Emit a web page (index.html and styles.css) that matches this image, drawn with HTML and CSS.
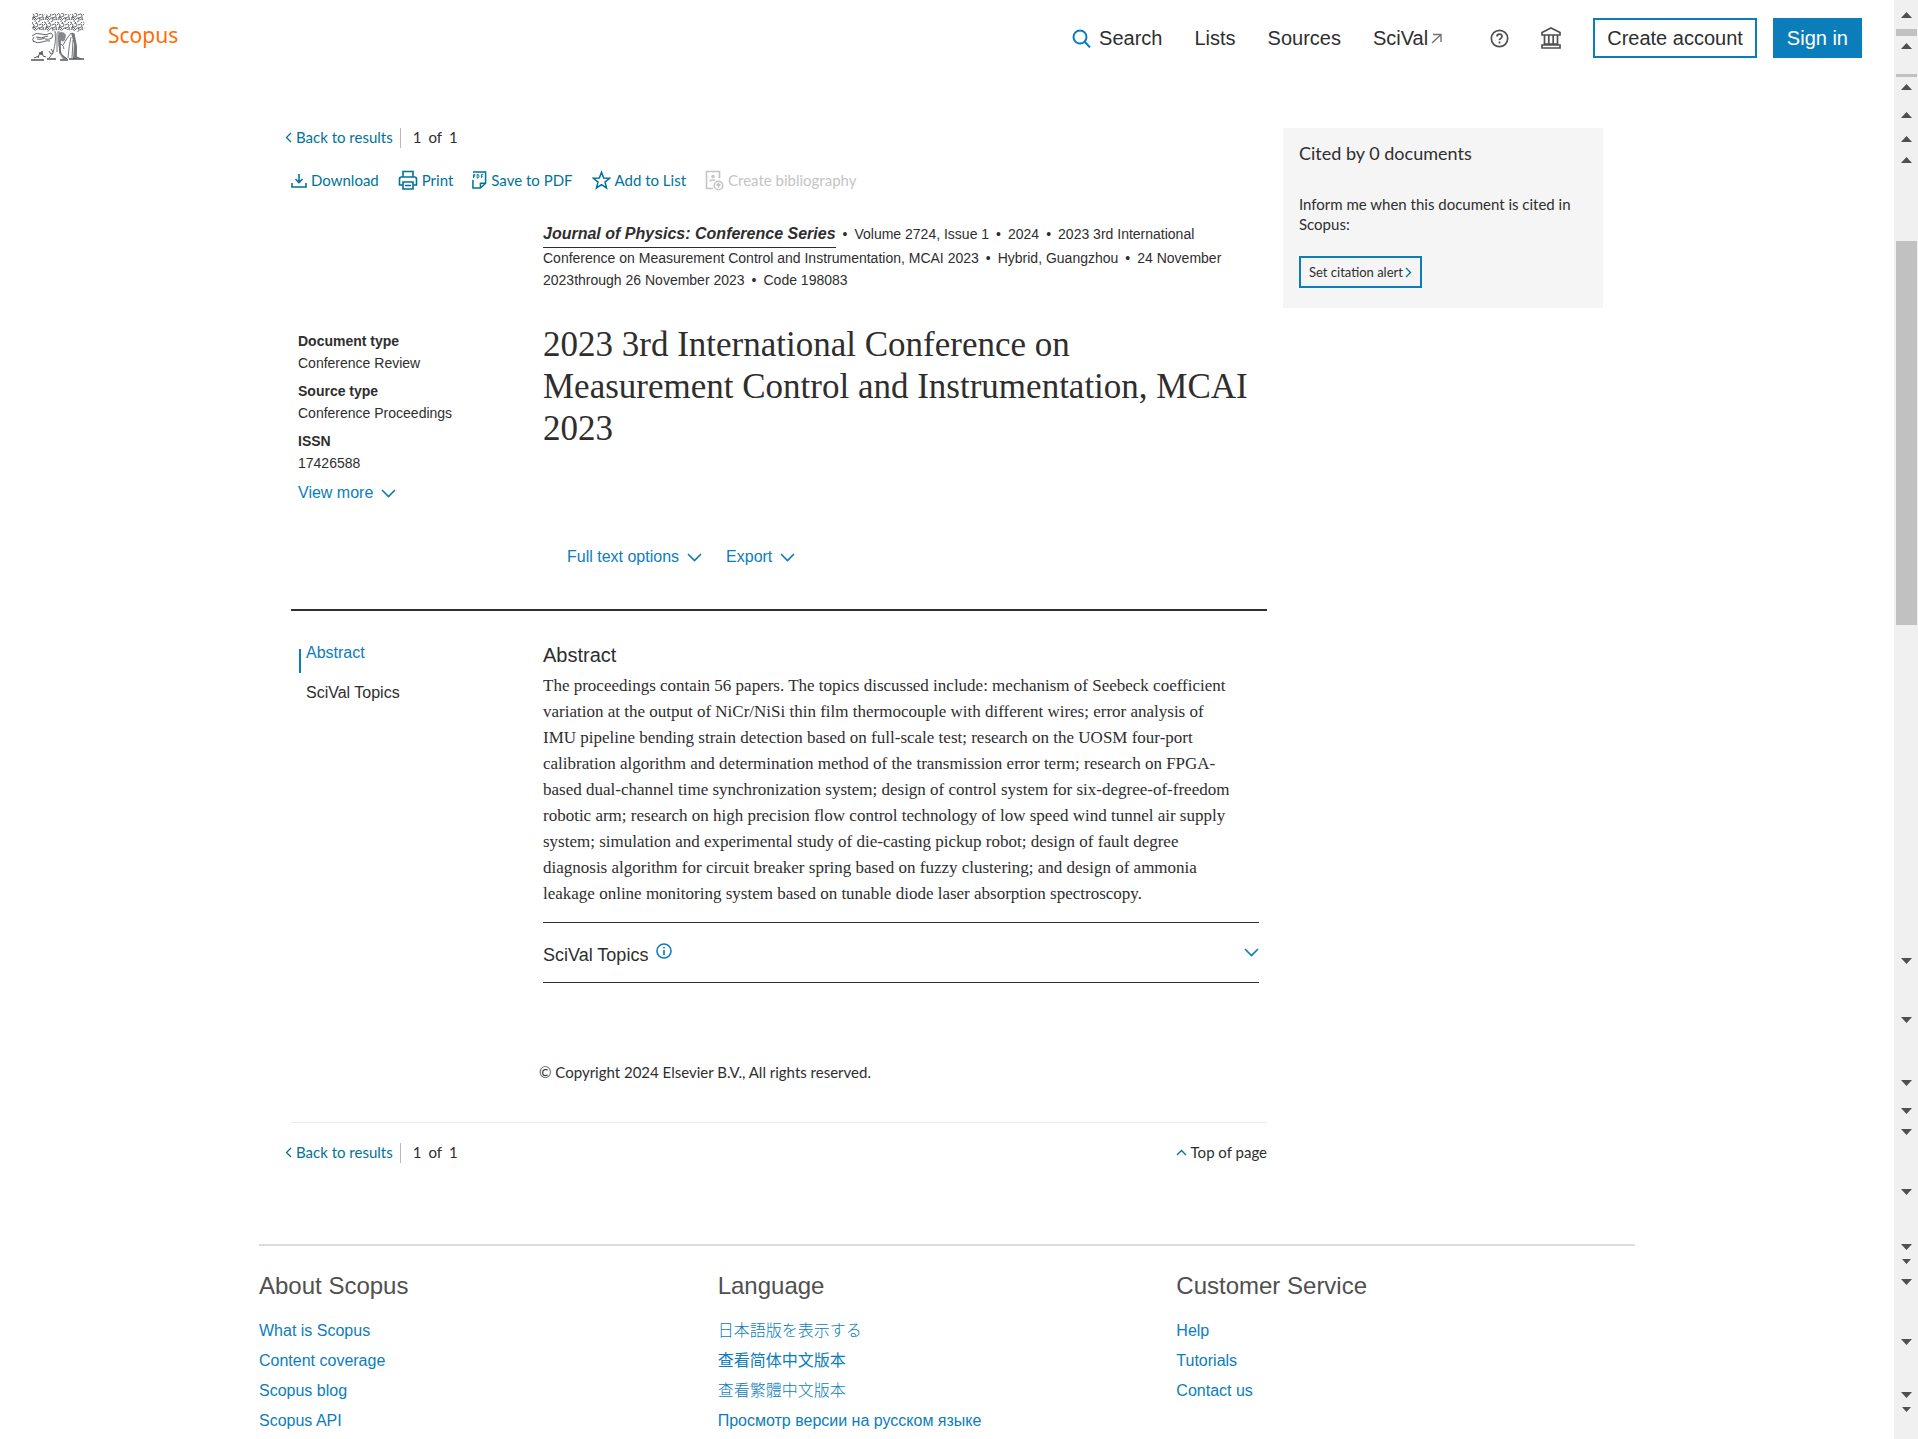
FILE: index.html
```
<!DOCTYPE html>
<html lang="en">
<head>
    <meta charset="UTF-8">
    <meta name="viewport" content="width=device-width, initial-scale=1.0">
    <title>Scopus - Document details</title>
    <link rel="stylesheet" href="styles.css">
</head>
<body>
    <div class="page">
        <!-- Top bar -->
        <header class="top-bar">
            <a href="#" class="brand">
                <svg class="tree" viewBox="0 0 54 48" width="54" height="48" fill="none" stroke="#54565a" aria-hidden="true">
                    <defs>
                        <pattern id="leaves" width="13" height="10" patternUnits="userSpaceOnUse">
                            <path d="M0 2q2-3 3 0t-2 3M4 0q3 0 3 2t-3 2M8 2q3-2 4 0t-3 3M1 7q0-2 2-1t1 3M6 6q2-2 3 0t-2 3M10 7q2-2 3 0M4 5l2 2M8 4l1 2M11 9l1 1M0 9l2 1M5 9l1 1M12 4l1 2M2 3l2 2" stroke="#54565a" stroke-width="0.9" fill="none"/>
                        </pattern>
                    </defs>
                    <path d="M1 1q5-2 10 0t10-1 11 0 11 0 10 1l0 8q2 5-1 8-4 3-8 1l-5 1-4-3-5 2-4 2-5-2-6 1-6-2-5 1q-4-2-3-7z" fill="url(#leaves)" stroke="none"/>
                    <path d="M1 23q4-4 9-2t10-1q3 2 1 5-3 2-7 1M2 28q4 3 9 1t8-1M3 24q-3 3 0 5M5 24q5 2 12-1M6 26q4 1 8-1" stroke-width="0.9"/>
                    <path d="M24 18q1 8 0 13t-2 9l-4 5M28 18q-1 9 0 15t3 9l5 4M26 20v19" stroke-width="0.8"/>
                    <path d="M28 20q4-3 7 2l-1 5q-3 3-4 0l0 14 7 5-5 0-4-6z" fill="#54565a" fill-opacity=".7" stroke="none"/>
                    <path d="M40 20q4-1 4 3l2 10v13h-4l1-15z" fill="#54565a" fill-opacity=".8" stroke="none"/>
                    <path d="M40 20q-3 4-5 7l-3 5M40 24q-2 8-3 21M42 27l-1 18M30 31q3 2 3 5" stroke-width="0.8"/>
                    <path d="M18 38q1 4 4 2M20 36l2 3M7 45l2-6 1 3 1-4 1 5 3 1M3 45l5-2M46 44l4 2" stroke-width="1"/>
                    <path d="M0 47h13M16 46h9M29 47h8M38 46h15" stroke-width="1.4"/>
                </svg>
                <span>Scopus</span>
            </a>
            <nav class="top-nav">
                <a href="#" class="nav-link">
                    <svg class="search-icon" viewBox="0 0 19 19" width="19" height="19" fill="none" stroke="#0c7dbb" stroke-width="2"><circle cx="8" cy="8" r="6.5"/><path d="M12.5 12.5l5.5 6"/></svg>
                    Search
                </a>
                <a href="#" class="nav-link">Lists</a>
                <a href="#" class="nav-link">Sources</a>
                <a href="#" class="nav-link scival">SciVal
                    <svg viewBox="0 0 12 12" width="12" height="12" fill="none" stroke="#737373" stroke-width="1.4"><path d="M3 2.500h8V10M11 2.500L2 11"/></svg>
                </a>
                <a href="#" class="nav-icon" aria-label="Help">
                    <svg viewBox="0 0 20 20" width="19" height="19" fill="none" stroke="#505050" stroke-width="1.8"><circle cx="10" cy="10" r="8.6"/><path d="M7.4 8q0-2.6 2.6-2.6t2.6 2.4q0 1.3-1.4 2.1T10 11.8M10 13.2v2"/></svg>
                </a>
                <a href="#" class="nav-icon" aria-label="Institution">
                    <svg viewBox="0 0 20 22" width="20" height="22" fill="none" stroke="#505050" stroke-width="1.7"><path d="M1 8V5.500L10 1l9 4.500V8zM3.500 8v9M7.800 8v9M12.200 8v9M16.500 8v9M2.500 17h15M1 21v-3h18v3z"/></svg>
                </a>
            </nav>
            <div class="account">
                <button class="btn">Create account</button>
                <button class="btn btn-fill">Sign in</button>
            </div>
        </header>

        <main class="main">
            <article class="document">
                <div class="pager">
                    <a href="#" class="back"><svg viewBox="0 0 7 11" width="7" height="11"><path d="M6 1L1.500 5.500 6 10"/></svg>Back to results</a>
                    <span class="count"><span>1</span><span>of</span><span>1</span></span>
                </div>

                <div class="toolbar">
                    <button class="tool">
                        <svg viewBox="0 0 16 16" width="16" height="16"><path d="M8 2v8M4.500 7l3.500 3.500L11.500 7M1 11v4h14v-4"/></svg>Download
                    </button>
                    <button class="tool">
                        <svg viewBox="0 0 20 20" width="20" height="20"><path d="M5 7V1.500h10V7M5 15H1.500V9q0-2 2-2h13q2 0 2 2v6H15M5 12h10v7H5zM7 15.500h6"/></svg>Print
                    </button>
                    <button class="tool">
                        <svg viewBox="0 0 16 20" width="15" height="20"><path d="M1 10v8.500h8l5.500-5V1.500H1M9 18v-4.500h5"/><path d="M1.500 8V4h1.500v2H1.500M5.500 4v4q2 0 2-2t-2-2M10 8V4h2M10 6h1.500" stroke-width="1"/></svg>Save to PDF
                    </button>
                    <button class="tool">
                        <svg viewBox="0 0 20 20" width="19" height="20"><path d="M10 2l2.300 5.800 6.200.4-4.800 4 1.600 6.200-5.300-3.500-5.300 3.500 1.600-6.200-4.800-4 6.200-.4z"/></svg>Add to List
                    </button>
                    <button class="tool" disabled>
                        <svg viewBox="0 0 19 22" width="19" height="22"><path d="M8 19.500H1.500V2.500h13V9"/><circle cx="8" cy="7.500" r="1"/><path d="M5 12.500q0-1.500 3-1.500h2"/><circle cx="13.500" cy="16.500" r="4.300"/><path d="M13.500 19v-4.500M11.500 16.500l2-2 2 2" stroke-width="1.300"/></svg>Create bibliography
                    </button>
                </div>

                <div class="overview">
                    <aside class="meta">
                        <dl>
                            <dt>Document type</dt>
                            <dd>Conference Review</dd>
                            <dt>Source type</dt>
                            <dd>Conference Proceedings</dd>
                            <dt>ISSN</dt>
                            <dd>17426588</dd>
                        </dl>
                        <button class="link-btn">View more <svg viewBox="0 0 15 9" width="15" height="9"><path d="M1 1l6.500 6.500L14 1"/></svg></button>
                    </aside>
                    <div class="summary">
                        <p class="source"><a href="#" class="journal">Journal of Physics: Conference Series</a><i>•</i>Volume 2724, Issue 1<i>•</i>2024<i>•</i>2023 3rd International<br>Conference on Measurement Control and Instrumentation, MCAI 2023<i>•</i>Hybrid, Guangzhou<i>•</i>24 November<br>2023through 26 November 2023<i>•</i>Code 198083</p>
                        <h1>2023 3rd International Conference on<br>Measurement Control and Instrumentation, MCAI<br>2023</h1>
                        <div class="actions">
                            <button class="link-btn">Full text options <svg viewBox="0 0 15 9" width="15" height="9"><path d="M1 1l6.500 6.500L14 1"/></svg></button>
                            <button class="link-btn">Export <svg viewBox="0 0 15 9" width="15" height="9"><path d="M1 1l6.500 6.500L14 1"/></svg></button>
                        </div>
                    </div>
                </div>

                <div class="content">
                    <nav class="side-nav">
                        <a href="#abstract" class="active">Abstract</a>
                        <a href="#topics">SciVal Topics</a>
                    </nav>
                    <div class="sections">
                        <h2 id="abstract">Abstract</h2>
                        <p class="abstract">The proceedings contain 56 papers. The topics discussed include: mechanism of Seebeck coefficient<br>variation at the output of NiCr/NiSi thin film thermocouple with different wires; error analysis of<br>IMU pipeline bending strain detection based on full-scale test; research on the UOSM four-port<br>calibration algorithm and determination method of the transmission error term; research on FPGA-<br>based dual-channel time synchronization system; design of control system for six-degree-of-freedom<br>robotic arm; research on high precision flow control technology of low speed wind tunnel air supply<br>system; simulation and experimental study of die-casting pickup robot; design of fault degree<br>diagnosis algorithm for circuit breaker spring based on fuzzy clustering; and design of ammonia<br>leakage online monitoring system based on tunable diode laser absorption spectroscopy.</p>
                        <button class="topics" id="topics">
                            <span>SciVal Topics</span>
                            <svg class="info" viewBox="0 0 16 16" width="16" height="16"><circle cx="8" cy="8" r="7"/><path d="M8 7v5M8 4v1.500"/></svg>
                            <svg class="chevron" viewBox="0 0 15 9" width="15" height="9"><path d="M1 1l6.500 6.500L14 1"/></svg>
                        </button>
                        <p class="copyright">© Copyright 2024 Elsevier B.V., All rights reserved.</p>
                    </div>
                </div>

                <div class="pager pager-bottom">
                    <a href="#" class="back"><svg viewBox="0 0 7 11" width="7" height="11"><path d="M6 1L1.500 5.500 6 10"/></svg>Back to results</a>
                    <span class="count"><span>1</span><span>of</span><span>1</span></span>
                    <a href="#" class="to-top"><svg viewBox="0 0 11 7" width="11" height="7"><path d="M1 6l4.500-4.500L10 6"/></svg>Top of page</a>
                </div>
            </article>

            <aside class="cited">
                <h3>Cited by 0 documents</h3>
                <p>Inform me when this document is cited in<br>Scopus:</p>
                <button class="alert-btn">Set citation alert<svg viewBox="0 0 7 11" width="7" height="11"><path d="M1 1l4.500 4.500L1 10"/></svg></button>
            </aside>
        </main>

        <footer class="footer">
            <div>
                <h4>About Scopus</h4>
                <a href="#">What is Scopus</a>
                <a href="#">Content coverage</a>
                <a href="#">Scopus blog</a>
                <a href="#">Scopus API</a>
            </div>
            <div>
                <h4>Language</h4>
                <a href="#" class="ja" lang="ja">日本語版を表示する</a>
                <a href="#" class="zh" lang="zh-CN">查看简体中文版本</a>
                <a href="#" class="tw" lang="zh-TW">查看繁體中文版本</a>
                <a href="#" lang="ru">Просмотр версии на русском языке</a>
            </div>
            <div>
                <h4>Customer Service</h4>
                <a href="#">Help</a>
                <a href="#">Tutorials</a>
                <a href="#">Contact us</a>
            </div>
        </footer>
    </div>

    <!-- Scroll track -->
    <div class="track" aria-hidden="true">
        <svg width="24" height="1439" viewBox="0 0 24 1439">
            <path fill="#c1c1c1" d="M2 29h21v7H2zM2 74h21v3H2zM2 241h21v384H2z"/>
            <path fill="#505050" d="M7 18l5.500-6 5.500 6zM7 49l5.500-6 5.500 6zM7 90l5.500-6 5.500 6zM7 118l5.500-6 5.500 6zM7 142l5.500-6 5.500 6zM7 163l5.500-6 5.500 6z"/>
            <path fill="#505050" d="M7 958h11l-5.500 6zM7 1017h11l-5.500 6zM7 1080h11l-5.500 6zM7 1108h11l-5.500 6zM7 1129h11l-5.500 6zM7 1189h11l-5.500 6zM7 1244h11l-5.500 6zM8 1259h9l-4.500 5zM7 1279h11l-5.500 6zM7 1339h11l-5.500 6zM7 1392h11l-5.500 6zM8 1407h9l-4.500 5z"/>
        </svg>
    </div>
</body>
</html>
```
FILE: styles.css
```
* {
    box-sizing: border-box;
}

body {
    margin: 0;
    display: flex;
    background-color: #fff;
    color: #2e2e2e;
    font-family: "Liberation Sans", Arial, sans-serif;
    font-size: 16px;
    line-height: 22px;
}

h1, h2, h3, h4, p, dl, dd {
    margin: 0;
    font-weight: normal;
}

a {
    color: #0c7dbb;
    text-decoration: none;
}

button {
    padding: 0;
    border: none;
    background: none;
    color: inherit;
    font: inherit;
    cursor: pointer;
}

svg {
    flex: none;
}

.page {
    flex: 1;
    min-width: 0;
}

.track {
    width: 24px;
    background-color: #f0f0f0;
}

.track svg {
    display: block;
}

/* Top bar */
.top-bar {
    display: flex;
    align-items: center;
    height: 76px;
    padding: 0 32px 0 31px;
}

.brand {
    display: flex;
    align-items: center;
    gap: 23px;
    margin-right: auto;
    padding-bottom: 2px;
    color: #ff6c00;
    font-family: "Noto Sans", sans-serif;
    font-size: 21px;
    line-height: 44px;
}

.brand span {
    margin-bottom: 4px;
}

.top-nav, .account {
    display: flex;
    align-items: center;
}

.top-nav {
    gap: 32px;
    margin-right: 32px;
}

.nav-link {
    display: flex;
    align-items: center;
    color: #2e2e2e;
    font-size: 20px;
}

.nav-icon {
    display: flex;
}

.search-icon {
    margin-right: 8px;
}

.scival {
    gap: 2px;
    margin-right: 16px;
}

.account {
    gap: 16px;
}

.btn {
    height: 40px;
    padding: 0 12px;
    border: 2px solid #0c7dbb;
    font-size: 20px;
}

.btn-fill {
    background-color: #0c7dbb;
    color: #fff;
}

/* Document page */
.main {
    display: flex;
    align-items: flex-start;
    gap: 16px;
    max-width: 1376px;
    margin: 0 auto;
    padding: 52px 32px 0;
}

.document {
    flex: 1;
}

.pager, .toolbar, .cited, .copyright {
    font-family: Lato, sans-serif;
    font-size: 15px;
    line-height: 20px;
}

.pager {
    display: flex;
    align-items: center;
    height: 20px;
    line-height: 18px;
}

.pager svg, .alert-btn svg {
    fill: none;
    stroke: #007398;
    stroke-width: 1.3;
}

.back {
    display: flex;
    align-items: center;
    gap: 4px;
    height: 18px;
    margin: 0 0 2px -6px;
    color: #007398;
}

.count {
    display: flex;
    gap: 7px;
    height: 20px;
    margin-left: 7px;
    padding-left: 12px;
    border-left: 1px solid #b9b9b9;
}

.to-top {
    display: flex;
    align-items: center;
    gap: 4px;
    margin: 0 0 2px auto;
    color: #2e2e2e;
}

.toolbar {
    display: flex;
    gap: 19px;
    height: 20px;
    margin-top: 22px;
}

.tool {
    display: flex;
    align-items: center;
    gap: 4px;
    color: #007398;
}

.tool svg {
    fill: none;
    stroke: currentColor;
    stroke-width: 1.6;
}

.tool:disabled {
    color: #c4c4c4;
    cursor: default;
}

.overview, .content {
    display: grid;
    grid-template-columns: 252px 1fr;
    padding-right: 8px;
}

.overview {
    margin-top: 31px;
    padding-bottom: 41px;
    border-bottom: 2px solid #2e2e2e;
}

.meta {
    padding: 109px 0 0 7px;
    font-size: 14px;
}

.meta dt {
    font-weight: bold;
}

.meta dd {
    margin-bottom: 6px;
}

.meta dl {
    margin-bottom: 8px;
}

.link-btn {
    display: flex;
    align-items: center;
    gap: 8px;
    color: #0c7dbb;
    font-size: 16px;
    line-height: 22px;
}

.link-btn svg, .topics svg {
    fill: none;
    stroke: #0c7dbb;
    stroke-width: 1.6;
}

.source {
    font-size: 14px;
    white-space: nowrap;
}

.source i {
    margin: 0 7px;
    font-style: normal;
}

.journal {
    padding-bottom: 5px;
    border-bottom: 1px solid #2e2e2e;
    color: #2e2e2e;
    font-size: 16px;
    font-style: italic;
    font-weight: bold;
    line-height: 26px;
}

h1 {
    margin-top: 33px;
    font-family: Georgia, "Liberation Serif", serif;
    font-size: 35px;
    line-height: 42px;
}

.actions {
    display: flex;
    gap: 24px;
    margin: 96px 0 0 24px;
}

.side-nav {
    display: flex;
    flex-direction: column;
    gap: 16px;
    padding: 30px 0 0 15px;
    line-height: 24px;
}

.side-nav a {
    position: relative;
    color: #2e2e2e;
}

.side-nav .active {
    color: #0c7dbb;
}

.side-nav .active::before {
    content: "";
    position: absolute;
    left: -7px;
    top: 8px;
    width: 2px;
    height: 24px;
    background-color: #0c7dbb;
}

h2 {
    margin: 32px 0 6px;
    font-size: 20px;
    line-height: 24px;
}

.abstract {
    font-family: Georgia, "Liberation Serif", serif;
    font-size: 17px;
    line-height: 26px;
    white-space: nowrap;
}

.topics {
    display: flex;
    align-items: center;
    width: 100%;
    height: 61px;
    margin-top: 15px;
    border-top: 1px solid #2e2e2e;
    border-bottom: 1px solid #2e2e2e;
    font-size: 18px;
}

.topics span {
    padding-top: 5px;
}

.info {
    margin: 0 0 3px 8px;
}

.chevron {
    margin-left: auto;
}

.copyright {
    margin: 79px 0 40px -4px;
}

.pager-bottom {
    box-sizing: content-box;
    padding-top: 20px;
    border-top: 1px solid #ebebeb;
}

.cited {
    width: 320px;
    height: 180px;
    padding: 12px 16px;
    background-color: #f5f5f5;
}

.cited h3 {
    font-size: 18px;
    line-height: 26px;
}

.cited p {
    margin: 28px 0 22px;
}

.alert-btn {
    display: flex;
    align-items: center;
    gap: 2px;
    height: 32px;
    padding: 0 8px;
    border: 2px solid #0c7dbb;
    font-size: 13px;
}

/* Footer */
.footer {
    display: grid;
    grid-template-columns: repeat(3, 1fr);
    max-width: 1376px;
    margin: 81px auto 0;
    padding-top: 25px;
    border-top: 2px solid #dcdcdc;
}

.footer h4 {
    margin-bottom: 15px;
    color: #505050;
    font-size: 24px;
    line-height: 30px;
}

.footer a {
    display: block;
    height: 30px;
    line-height: 30px;
}

.ja {
    font-family: "Liberation Sans", "Noto Sans CJK JP", sans-serif;
    font-weight: 300;
}

.zh {
    font-family: "Liberation Sans", "Noto Sans CJK SC", sans-serif;
}

.tw {
    font-family: "Liberation Sans", "Noto Sans CJK TC", sans-serif;
    font-weight: 300;
}
```
